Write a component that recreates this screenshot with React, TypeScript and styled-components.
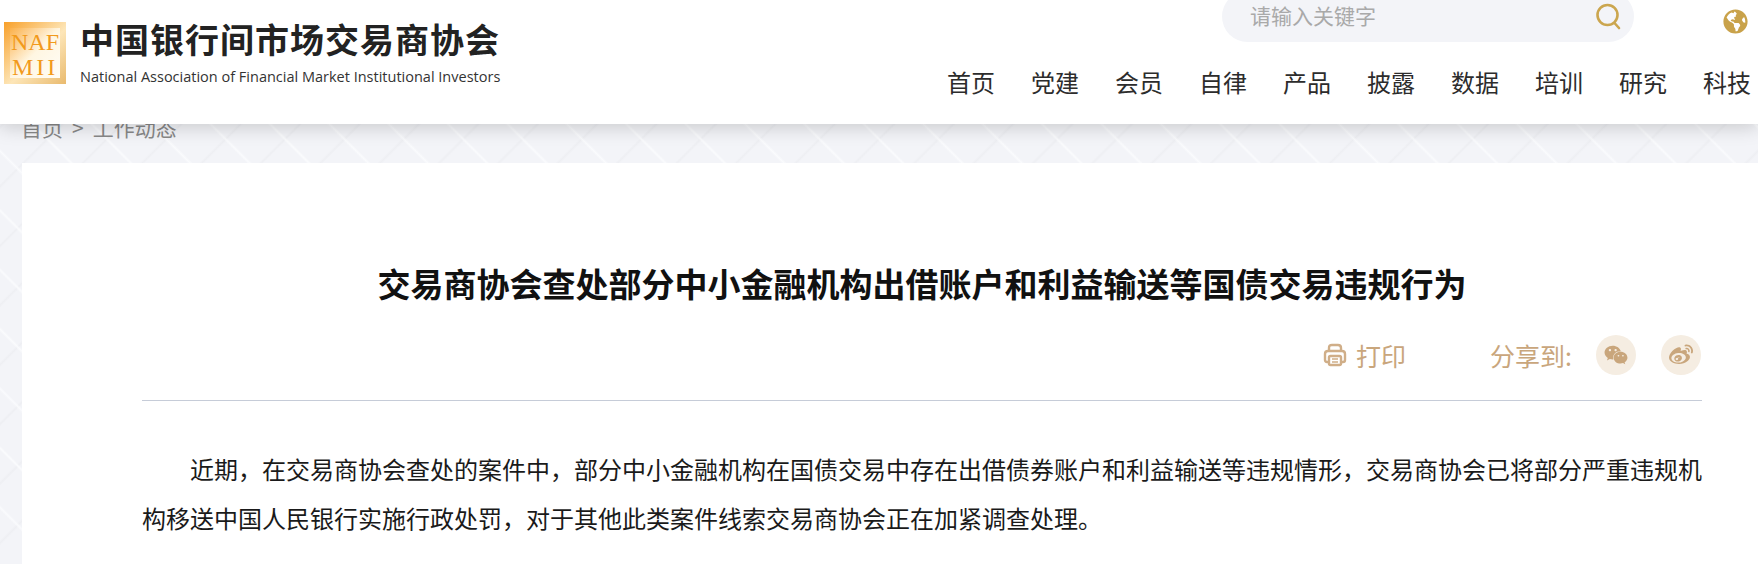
import styled, { createGlobalStyle } from 'styled-components';
import { FaGlobeAmericas, FaWeibo, FaWeixin } from 'react-icons/fa';

const NAV_ITEMS = ['首页', '党建', '会员', '自律', '产品', '披露', '数据', '培训', '研究', '科技'];
const CJK = '"Noto Sans CJK SC", "Noto Sans", sans-serif';

const GlobalStyle = createGlobalStyle`
  html, body {
    margin: 0;
    height: 564px;
    overflow: hidden;
    background: #fff;
    font-family: ${CJK};
  }
`;

const Page = styled.div`
  position: relative;
  width: 1758px;
  height: 564px;
  overflow: hidden;
  background-color: #f3f4f8;
  background-image:
    repeating-linear-gradient(45deg, transparent 0 38px, #fafbfd 40px, transparent 42px),
    repeating-linear-gradient(-45deg, transparent 0 38px, #eeeff3 40px, transparent 42px);
`;

const Header = styled.header`
  position: absolute;
  top: 0;
  left: 0;
  z-index: 2;
  width: 100%;
  height: 124px;
  background: #fff;
  box-shadow: 0 3px 18px rgba(0, 0, 0, 0.18);
`;

const Brand = styled.div`
  position: absolute;
  top: 22px;
  left: 4px;
  display: flex;
  gap: 15px;
`;

const BrandText = styled.div`
  display: flex;
  flex-direction: column;
  margin-top: -1px;
`;

const BrandName = styled.div`
  font-size: 34px;
  line-height: 36px;
  font-weight: 700;
  color: #222;
  white-space: nowrap;
  letter-spacing: 1px;
  margin-left: -1px;
`;

const BrandSub = styled.div`
  margin-top: 11px;
  font-family: "Open Sans", "Noto Sans", sans-serif;
  font-size: 14.5px;
  line-height: 18px;
  color: #333;
  white-space: nowrap;
  margin-left: -1px;
`;

const Search = styled.div`
  position: absolute;
  top: -9px;
  left: 1222px;
  width: 412px;
  height: 51px;
  padding: 0 12px 0 28px;
  box-sizing: border-box;
  display: flex;
  align-items: center;
  justify-content: space-between;
  border-radius: 26px;
  background: #f3f4f8;
  font-size: 21px;
  color: #a9a9a9;
`;

const SearchHint = styled.span`
  padding-bottom: 3px;
`;

const GlobeIcon = styled(FaGlobeAmericas)`
  position: absolute;
  top: 9px;
  left: 1723px;
  font-size: 25px;
  color: #c9a24a;
`;

const Nav = styled.nav`
  position: absolute;
  top: 65px;
  left: 947px;
  display: flex;
  gap: 36px;
`;

const NavItem = styled.a`
  font-size: 24px;
  line-height: 34px;
  color: #2c2c2c;
  white-space: nowrap;
`;

const Crumbs = styled.div`
  display: flex;
  padding: 112px 0 0 21px;
  height: 51px;
  font-size: 21px;
  line-height: 30px;
  color: #888;
`;

const CrumbSep = styled.span`
  margin: 0 9px;
`;

const Card = styled.main`
  width: 1800px;
  margin-left: 22px;
  padding: 0 120px;
  box-sizing: border-box;
  height: 420px;
  background: #fff;
`;

const Title = styled.h1`
  margin: 0;
  padding-top: 97px;
  font-size: 33px;
  line-height: 46px;
  font-weight: 700;
  color: #111;
  text-align: center;
  white-space: nowrap;
`;

const Tools = styled.div`
  margin-top: 29px;
  height: 65px;
  padding-right: 1px;
  display: flex;
  justify-content: flex-end;
  align-items: flex-start;
  border-bottom: 1px solid #c6ccd8;
  color: #c9a67c;
  font-size: 25px;
  line-height: 40px;
`;

const PrintButton = styled.div`
  display: flex;
  align-items: center;
  gap: 9px;
  margin-right: 84px;
`;

const ShareLabel = styled.span`
  margin-right: 24px;
`;

const ShareButton = styled.div<{ $gap: number }>`
  width: 40px;
  height: 40px;
  margin-left: ${(p) => p.$gap}px;
  display: flex;
  align-items: center;
  justify-content: center;
  border-radius: 50%;
  background: #f5ede2;
  color: #c9a67c;
  font-size: 24px;
`;

const Body = styled.p`
  margin: 0;
  padding-top: 43px;
  font-size: 24px;
  line-height: 49px;
  color: #1a1a1a;
  text-indent: 2em;
  text-align: justify;
`;

function LogoMark() {
  return (
    <svg width="62" height="62" viewBox="0 0 62 62">
      <defs>
        <linearGradient id="logoFrame" x1="0" y1="0" x2="1" y2="1">
          <stop offset="0" stopColor="#f8a02a" />
          <stop offset="0.55" stopColor="#fde6b8" />
          <stop offset="1" stopColor="#e9ba6e" />
        </linearGradient>
        <linearGradient id="logoInner" x1="0" y1="0" x2="1" y2="1">
          <stop offset="0" stopColor="#fbb04a" />
          <stop offset="0.5" stopColor="#fff6e2" />
          <stop offset="1" stopColor="#fffdf6" />
        </linearGradient>
      </defs>
      <rect width="62" height="62" fill="url(#logoFrame)" />
      <rect x="6" y="6" width="50" height="50" fill="url(#logoInner)" />
      <text x="7" y="28" fontFamily='"Liberation Serif", serif' fontSize="24" fill="#f29a1c">
        NAF
      </text>
      <text x="8" y="53" fontFamily='"Liberation Serif", serif' fontSize="24" fill="#f29a1c" letterSpacing="3">
        MII
      </text>
    </svg>
  );
}

export default function App() {
  return (
    <Page>
      <GlobalStyle />
      <Header>
        <Brand>
          <LogoMark />
          <BrandText>
            <BrandName>中国银行间市场交易商协会</BrandName>
            <BrandSub>National Association of Financial Market Institutional Investors</BrandSub>
          </BrandText>
        </Brand>
        <Search>
          <SearchHint>请输入关键字</SearchHint>
          <svg width="27" height="27" viewBox="0 0 27 27" fill="none" stroke="#cba64f" strokeWidth="2.6" strokeLinecap="round">
            <circle cx="12.500" cy="12" r="10" />
            <path d="M19.500 20 L24 25" />
          </svg>
        </Search>
        <GlobeIcon />
        <Nav>
          {NAV_ITEMS.map((item) => (
            <NavItem key={item}>{item}</NavItem>
          ))}
        </Nav>
      </Header>
      <Crumbs>
        首页
        <CrumbSep>&gt;</CrumbSep>
        工作动态
      </Crumbs>
      <Card>
        <Title>交易商协会查处部分中小金融机构出借账户和利益输送等国债交易违规行为</Title>
        <Tools>
          <PrintButton>
            <svg width="24" height="24" viewBox="0 0 24 24" fill="none" stroke="#d0ae88" strokeWidth="2.4">
              <path d="M6 8 V5 Q6 2 9 2 H15 Q18 2 18 5 V8" />
              <path d="M6 19 H4 Q2 19 2 17 V11 Q2 8 5 8 H19 Q22 8 22 11 V17 Q22 19 20 19 H18" />
              <rect x="6" y="13" width="12" height="9" rx="1.500" fill="#fff" />
              <path d="M9 16 H15 M9 19 H15" strokeWidth="1.600" />
            </svg>
            打印
          </PrintButton>
          <ShareLabel>分享到:</ShareLabel>
          <ShareButton $gap={0}>
            <FaWeixin />
          </ShareButton>
          <ShareButton $gap={25}>
            <FaWeibo />
          </ShareButton>
        </Tools>
        <Body>
          近期，在交易商协会查处的案件中，部分中小金融机构在国债交易中存在出借债券账户和利益输送等违规情形，交易商协会已将部分严重违规机构移送中国人民银行实施行政处罚，对于其他此类案件线索交易商协会正在加紧调查处理。
        </Body>
      </Card>
    </Page>
  );
}
